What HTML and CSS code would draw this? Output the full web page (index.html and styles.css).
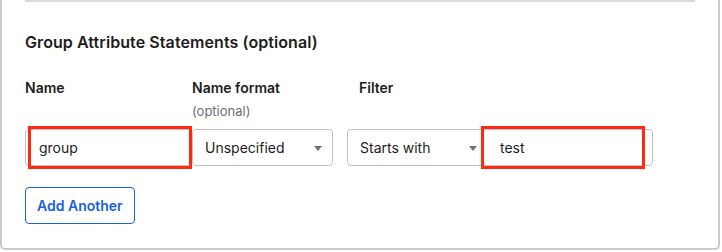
FILE: index.html
```html
<!DOCTYPE html>
<html>
<head>
  <title>Group Attribute Statements</title>
  <link rel="stylesheet" href="styles.css">
</head>
<body>

  <!-- Settings panel (top is scrolled out of view) -->
  <div class="panel">
    <div class="panel-inner">

      <h2 class="section-title">Group Attribute Statements (optional)</h2>

      <!-- Column labels -->
      <div class="labels">
        <div class="label">Name</div>
        <div class="label">Name format<span class="hint">(optional)</span></div>
        <div class="label label-filter">Filter</div>
      </div>

      <!-- One statement row -->
      <div class="statement">
        <div class="field field-name">
          <input class="text-input" type="text" value="group">
          <div class="highlight hl-name"></div>
        </div>

        <div class="select-wrap field-format">
          <select class="select">
            <option selected>Unspecified</option>
            <option>URI Reference</option>
            <option>Basic</option>
          </select>
        </div>

        <div class="select-wrap field-filter">
          <select class="select">
            <option selected>Starts with</option>
            <option>Equals</option>
            <option>Contains</option>
            <option>Matches regex</option>
          </select>
        </div>

        <div class="field field-value">
          <input class="text-input" type="text" value="test">
          <div class="highlight hl-value"></div>
        </div>
      </div>

      <button class="btn-secondary">Add Another</button>

    </div>
  </div>

</body>
</html>
```

FILE: styles.css
```css
/* Page basics */
body {
  margin: 0;
  background: #fff;
  font-family: Inter, "Noto Sans", sans-serif;
  color: #1d1d21;
}

/* Outer card */
.panel {
  width: 716px;
  height: 248px;
  border: 2px solid #c9c9ce;
  border-top: none;
  border-radius: 0 0 5px 5px;
}

.panel-inner {
  margin: 0 23px;
  border-top: 2px solid #dcdce0;
}

/* Section heading */
.section-title {
  margin: 30px 0 0;
  font-size: 16px;
  line-height: 20px;
  font-weight: 600;
  letter-spacing: 0.08px;
}

/* Column labels */
.labels {
  display: grid;
  grid-template-columns: 167px 155px auto;
  margin-top: 27px;
}

.label {
  font-size: 14px;
  line-height: 18px;
  font-weight: 600;
}

.label-filter {
  padding-left: 12px;
}

.hint {
  display: block;
  margin-top: 5px;
  font-size: 13px;
  font-weight: 400;
  color: #6e6e78;
}

/* Statement row */
.statement {
  display: flex;
  margin-top: 9px;
}

.field {
  position: relative;
}

.field-name {
  width: 167px;
}

.field-format {
  width: 141px;
}

.field-filter {
  width: 141px;
  margin-left: 14px;
}

/* value input tucks under the filter select's right edge */
.field-value {
  width: 170px;
  margin-left: -5px;
}

.text-input,
.select {
  box-sizing: border-box;
  width: 100%;
  height: 37px;
  padding: 0 12px;
  border: 1px solid #c1c1c8;
  border-radius: 4px;
  background: #fff;
  font-family: inherit;
  font-size: 14px;
  color: #1d1d21;
  outline: none;
}

.text-input {
  padding-left: 13px;
}

.field-value .text-input {
  padding-left: 16px;
}

/* Select with drawn arrow */
.select-wrap {
  position: relative;
}

.select {
  appearance: none;
  -webkit-appearance: none;
}

.select-wrap::after {
  content: "";
  position: absolute;
  right: 11px;
  top: 17px;
  border-left: 4px solid transparent;
  border-right: 4px solid transparent;
  border-top: 5px solid #707078;
  pointer-events: none;
}

/* Red annotation boxes drawn over the screenshot */
.highlight {
  position: absolute;
  top: -3px;
  bottom: -3px;
  border: 3px solid #ff2a12;
  pointer-events: none;
}

.hl-name {
  left: 3px;
  right: 0;
}

.hl-value {
  left: -2px;
  right: 8px;
}

/* Outline button */
.btn-secondary {
  display: block;
  margin-top: 21px;
  height: 37px;
  padding: 0 11px;
  border: 1px solid #1662dd;
  border-radius: 4px;
  background: #fff;
  color: #1662dd;
  font-family: inherit;
  font-size: 14px;
  font-weight: 600;
  cursor: pointer;
}
```
